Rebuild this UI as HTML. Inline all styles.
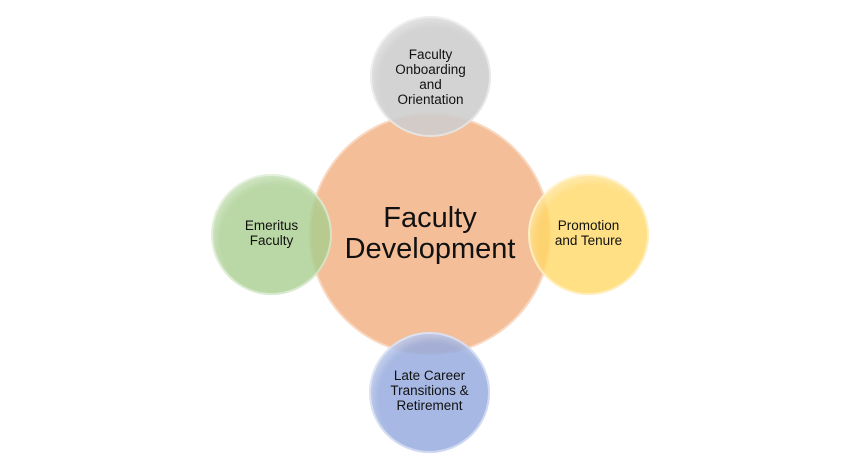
<!DOCTYPE html>
<html><head><style>
html,body{margin:0;padding:0;background:#fff;width:862px;height:474px;overflow:hidden}
.c{position:absolute;border-radius:50%;display:flex;align-items:center;justify-content:center;text-align:center;font-family:"Liberation Sans",sans-serif;color:#111;box-sizing:border-box}
.s{width:121px;height:121px;font-size:13.5px;line-height:15px;box-shadow:inset 0 0 0 2px rgba(255,255,255,.45), inset 4px 6px 8px rgba(255,255,255,.35)}
</style></head><body>
<div class="c" style="left:309px;top:113px;width:242px;height:242px;background:#F4BE98;font-size:29px;line-height:31px;box-shadow:inset 0 0 0 2px rgba(255,255,255,.4)"><div style="margin-top:0px">Faculty<br>Development</div></div>
<div class="c s" style="left:370px;top:16px;background:rgba(205,205,205,.88)"><div>Faculty<br>Onboarding<br>and<br>Orientation</div></div>
<div class="c s" style="left:211px;top:174px;background:rgba(168,206,142,.8)"><div style="margin-top:-4px">Emeritus<br>Faculty</div></div>
<div class="c s" style="left:528px;top:174px;background:rgba(255,216,102,.8)"><div style="margin-top:-4px">Promotion<br>and Tenure</div></div>
<div class="c s" style="left:369px;top:332px;background:rgba(150,172,222,.85)"><div style="margin-top:-4px">Late Career<br>Transitions &amp;<br>Retirement</div></div>
</body></html>
